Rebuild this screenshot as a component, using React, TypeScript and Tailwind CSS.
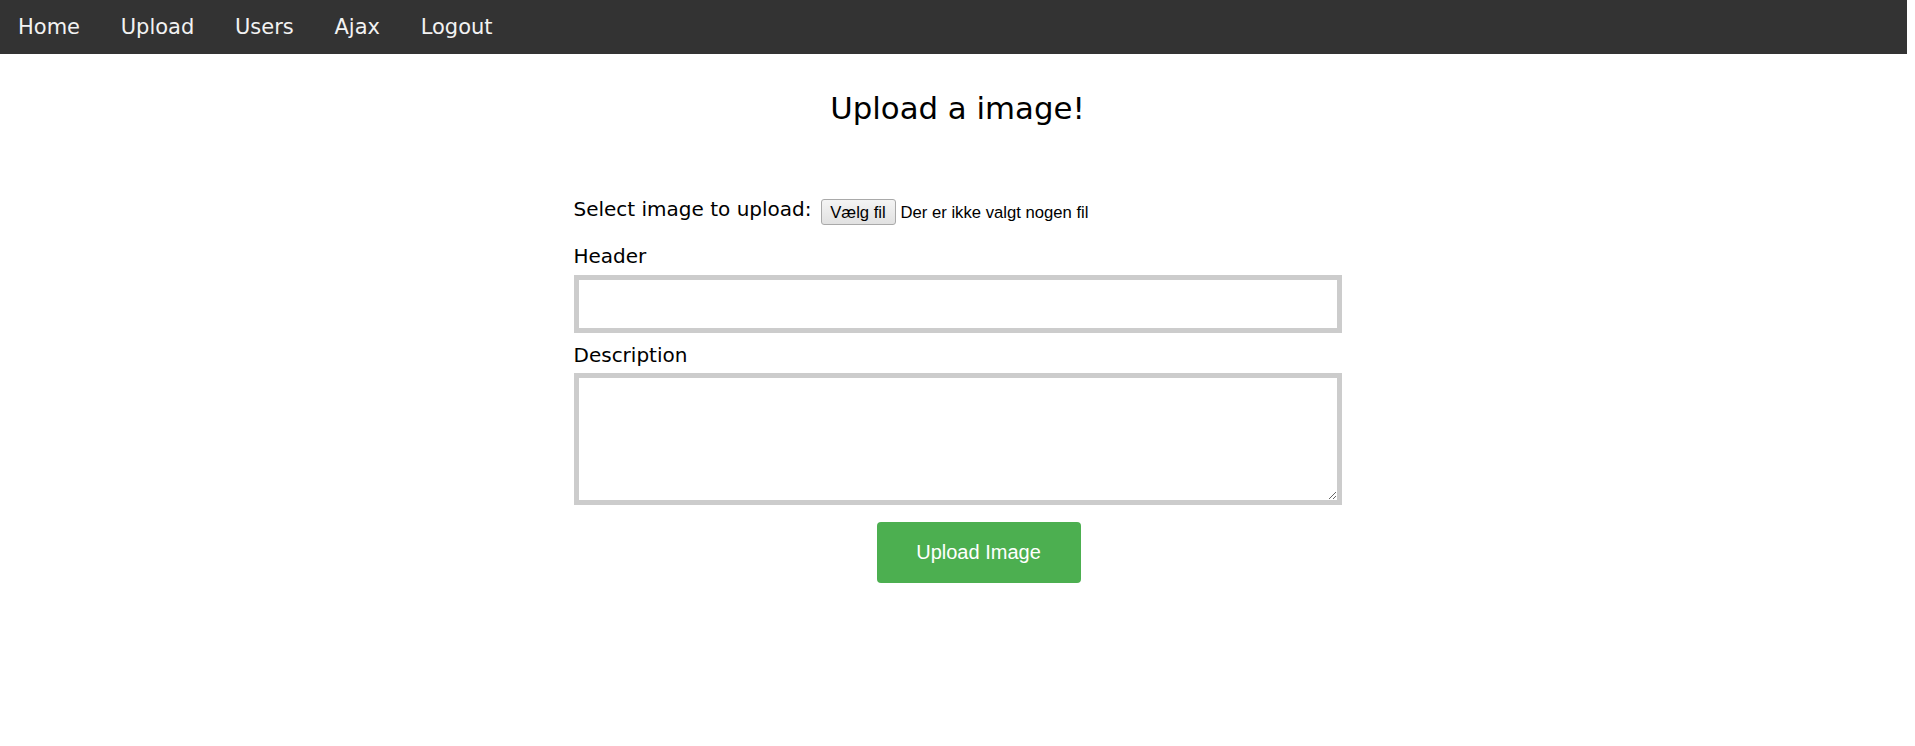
const navItems = ["Home", "Upload", "Users", "Ajax", "Logout"]

export default function App() {
  return (
    <div className="min-h-screen bg-white text-black font-['DejaVu_Sans',sans-serif]">
      {/* top navigation */}
      <nav className="flex h-[54px] w-[1907px] bg-[#333333]">
        {navItems.map((item) => (
          <a
            key={item}
            href="#"
            className="pl-[18px] pr-[22.7px] text-[21px] leading-[55px] text-[#f2f2f2]"
          >
            {item}
          </a>
        ))}
      </nav>

      <h2 className="mt-[36px] text-center text-[30.8px] leading-[36px] font-normal">
        Upload a image!
      </h2>

      <form className="mx-auto mt-[71px] flex w-[768px] flex-col">
        <div className="flex h-[28px] items-start">
          <span className="text-[20px] leading-[24px]">Select image to upload:</span>
          <span className="ml-[9px] mt-[2px] flex h-[26px] w-[75px] items-center justify-center rounded-[3px] border border-[#a9a9a9] bg-gradient-to-b from-[#f4f4f4] to-[#e1e1e1] font-['Liberation_Sans',Arial,sans-serif] text-[16.67px] text-black">
            Vælg fil
          </span>
          <span className="ml-[5px] mt-[2px] flex h-[26px] items-center font-['Liberation_Sans',Arial,sans-serif] text-[16.67px]">
            Der er ikke valgt nogen fil
          </span>
        </div>

        <label className="mt-[19px] text-[20px] leading-[24px]">Header</label>
        <input
          type="text"
          className="mt-[7px] h-[58px] w-full border-[5px] border-[#cccccc] bg-white outline-none"
        />

        <label className="mt-[10px] text-[20px] leading-[24px]">Description</label>
        <textarea className="mt-[6px] h-[132px] w-full border-[5px] border-[#cccccc] bg-white outline-none" />

        <button
          type="button"
          className="ml-[303px] mt-[17px] h-[61px] w-[204px] rounded-[4px] bg-[#4caf50] pb-[1px] font-['Liberation_Sans',Arial,sans-serif] text-[20px] text-white"
        >
          Upload Image
        </button>
      </form>
    </div>
  )
}
